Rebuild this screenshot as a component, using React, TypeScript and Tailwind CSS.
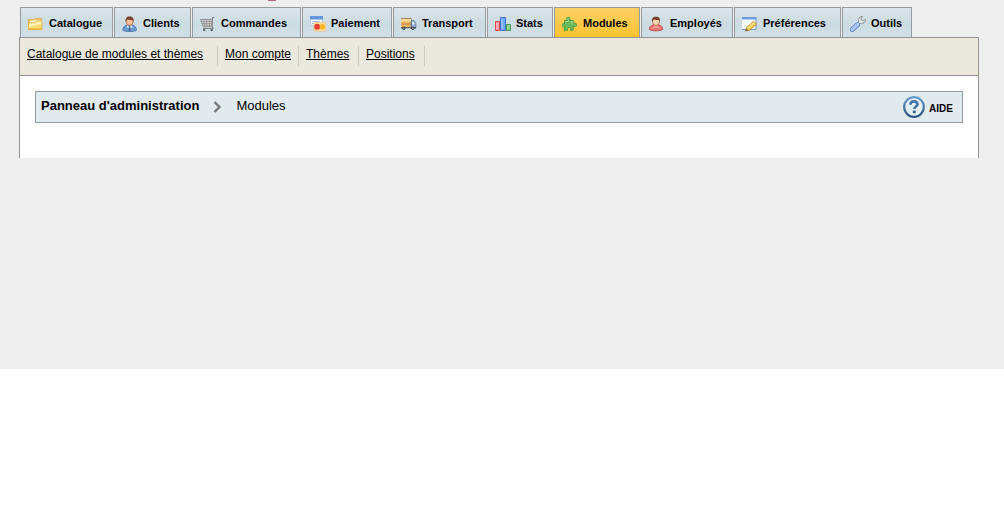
import type { ReactNode } from 'react';

type Tab = {
  label: string;
  width: string;
  icon: ReactNode;
  active?: boolean;
};

function Icon({ children }: { children: ReactNode }) {
  return (
    <svg viewBox="0 0 16 16" className="size-4 shrink-0" aria-hidden="true">
      {children}
    </svg>
  );
}

const tabs: Tab[] = [
  {
    label: 'Catalogue',
    width: 'w-[93px]',
    icon: (
      <Icon>
        <path d="M.5 13V3.5h5l1.5-1h6.5V13z" fill="#e9c468" stroke="#dfb45b" />
        <path d="M2 4.5h10.5v4H2z" fill="#fffdf0" />
        <path d="M.5 13.5V6.8h6L8 5.2h6v8.3z" fill="#fbdc72" stroke="#e6b33c" strokeWidth=".8" />
        <path d="M1 7.4h6l1.5-1.6h5v2L1 11z" fill="#fff3b4" />
        <path d="M1 13h13" stroke="#eda92d" />
      </Icon>
    ),
  },
  {
    label: 'Clients',
    width: 'w-[77px]',
    icon: (
      <Icon>
        <path d="M.8 14.3c0-3.5 1.8-5 4.8-5.4h4c3 .4 4.8 1.9 4.8 5.4-2 1.6-11.6 1.6-13.6 0z" fill="#6c9dd0" stroke="#3f6da5" strokeWidth=".8" />
        <path d="M5.3 9l2.3 2.5L9.9 9l.5 2-2.8 2.5L4.8 11z" fill="#e8f1fa" />
        <path d="M7 10.5h1.2l.7 3.5-1.3 1-1.3-1z" fill="#3b5f94" />
        <ellipse cx="7.6" cy="5.6" rx="3.5" ry="3.9" fill="#f4bd94" stroke="#a35a35" strokeWidth=".7" />
        <path d="M3.7 6C3 2.6 4.4.6 7.6.6s4.7 2 3.9 5.4l-1-2C8.2 4.2 6.2 3.7 5 3.6z" fill="#7c4030" />
      </Icon>
    ),
  },
  {
    label: 'Commandes',
    width: 'w-[109px]',
    icon: (
      <Icon>
        <path d="M14.5 1.5h-2L12 10.5l1 2H3" fill="none" stroke="#84878a" strokeWidth="1.2" />
        <path d="M.5 3.5h11.7l-.8 7-7.9.5z" fill="#dadcdd" stroke="#85888a" strokeWidth=".9" />
        <path d="M1 5.5h11M1.9 7.4h10M2.7 9.2h9M3.7 3.5l1 7M6.7 3.5l.4 7M9.5 3.5l-.2 7" stroke="#85888a" strokeWidth=".7" />
        <circle cx="4.2" cy="14" r="1.3" fill="#6d7073" />
        <circle cx="11.7" cy="14" r="1.3" fill="#6d7073" />
      </Icon>
    ),
  },
  {
    label: 'Paiement',
    width: 'w-[90px]',
    icon: (
      <Icon>
        <path d="M.5.5h12v9H.5z" fill="#eef4fb" stroke="#bccde5" />
        <path d="M0 0h13v3.5H0z" fill="#6595d9" />
        <path d="M2 5.5h8M2 7.5h3" stroke="#a8bfdf" />
        <rect x="4" y="6.5" width="11.5" height="8.5" rx="1" fill="#ffdf9a" stroke="#f4c783" strokeWidth=".8" />
        <circle cx="7.2" cy="10.7" r="2.9" fill="#e63b32" />
        <circle cx="12.3" cy="10.7" r="2.7" fill="#f7b52b" />
      </Icon>
    ),
  },
  {
    label: 'Transport',
    width: 'w-[93px]',
    icon: (
      <Icon>
        <path d="M-.5 2.5h10.7v9.3H-.5z" fill="#eeb763" stroke="#866e50" strokeWidth=".8" />
        <path d="M0 3h10v2.5H0z" fill="#f9dba1" />
        <path d="M0 8h10" stroke="#bd8549" />
        <path d="M10.3 4.5h2.5l2 3v4.7h-4.5z" fill="#93b7e8" stroke="#4e658f" strokeWidth=".8" />
        <path d="M11.3 5.8h1.2l1.3 2.4h-2.5z" fill="#eef7ff" />
        <path d="M0 11.6h15" stroke="#59616d" />
        <circle cx="2.8" cy="12.3" r="1.7" fill="#3f444b" />
        <circle cx="11.8" cy="12.3" r="1.7" fill="#3f444b" />
        <circle cx="2.8" cy="12.3" r=".6" fill="#c8cbd0" />
        <circle cx="11.8" cy="12.3" r=".6" fill="#c8cbd0" />
      </Icon>
    ),
  },
  {
    label: 'Stats',
    width: 'w-[66px]',
    icon: (
      <Icon>
        <path d="M.5 5.5h4v9h-4z" fill="#ff9a9a" stroke="#db4653" />
        <path d="M5.5 1.5h5v13h-5z" fill="#70a8f4" stroke="#3e6fce" />
        <path d="M11.5 8.5h4v6h-4z" fill="#84cf85" stroke="#439d4c" />
        <path d="M2 7v6M7 3v10M13 10v3" stroke="#fff" strokeOpacity=".5" />
      </Icon>
    ),
  },
  {
    label: 'Modules',
    width: 'w-[86px]',
    active: true,
    icon: (
      <Icon>
        <path
          d="M2.5 4.5H5C4 2.5 4.7 1.3 6.3 1.3S8.6 2.5 7.7 4.5h3.5v3.2c2-1 3.5-.5 3.5 1.2s-1.5 2.2-3.5 1.2v4.2H8.4c.8-2 .1-3-1.3-3s-2.1 1-1.3 3H2.5v-3.6c-1.4.9-2.4.3-2.4-1.3S1.100 7.100 2.500 8z"
          fill="#67bd5b"
          stroke="#479b42"
          strokeWidth=".9"
        />
        <path d="M3.500 5.500h3l-.5-3M8.500 5.500h1.700v3" fill="none" stroke="#a9dd98" strokeWidth=".9" />
      </Icon>
    ),
  },
  {
    label: 'Employés',
    width: 'w-[92px]',
    icon: (
      <Icon>
        <path d="M.3 13.500c0-3.200 1.800-4.300 4.500-4.500h4.400c2.700.2 4.500 1.300 4.500 4.500-2 1.800-11.400 1.800-13.400 0z" fill="#ee7770" stroke="#c84645" strokeWidth=".8" />
        <path d="M2.500 12.300c2-1.200 7-1.200 9 0" fill="none" stroke="#ffaca2" />
        <path d="M4.800 8.800h4.400L7 11z" fill="#f7cbab" />
        <ellipse cx="7" cy="5.600" rx="3.500" ry="3.800" fill="#fbd3b2" stroke="#a35a35" strokeWidth=".7" />
        <path d="M3.200 6C2.400 2.600 3.900.8 7 .8s4.600 1.800 3.800 5.200L9.900 4C7.600 4.200 5.600 3.700 4.400 3.600z" fill="#793a2b" />
      </Icon>
    ),
  },
  {
    label: 'Préférences',
    width: 'w-[107px]',
    icon: (
      <Icon>
        <path d="M-.5 1.500h14.500v12H-.5z" fill="#f7fbff" stroke="#7595c6" />
        <path d="M-1 1h15.500v2.500H-1z" fill="#6e9ce0" />
        <path d="M3.500 15l1-3.600 7-6 3.300 2.600-7.300 6.300z" fill="#f4cc56" stroke="#b98534" strokeWidth=".8" />
        <path d="M5.500 12.200l7-5.500" stroke="#fff0a3" />
        <path d="M3.200 15.300l1-3 2.200 2.200z" fill="#8b6345" />
      </Icon>
    ),
  },
  {
    label: 'Outils',
    width: 'w-[70px]',
    icon: (
      <Icon>
        <path d="M7.300 7.300L8.500 5.500C7.900 2.600 9.600.3 12.400.4L10.900 3l1.800 1.700 2.600-1.300c.3 3-2.200 4.700-4.700 4L9 9z" fill="#dedfe1" stroke="#86898e" strokeWidth=".9" />
        <path d="M2.200 13.600l5.400-5" stroke="#6689cb" strokeWidth="5" strokeLinecap="round" />
        <path d="M2.300 13.400l5.200-4.900" stroke="#a9c4f5" strokeWidth="3.400" strokeLinecap="round" />
      </Icon>
    ),
  },
];

const subTabs = [
  { label: 'Catalogue de modules et thèmes', width: 'w-[191px]' },
  { label: 'Mon compte', width: 'w-[74px]' },
  { label: 'Thèmes', width: 'w-[53px]' },
  { label: 'Positions', width: 'w-[59px]' },
];

export default function App() {
  return (
    <div className="min-h-screen bg-white font-['Liberation_Sans',Arial,sans-serif] text-xs text-black">
      <div className="bg-[#eeeeee] pr-[25px] pb-[211px] pl-[19px]">
        <div className="h-[7px]">
          <div className="ml-[249px] h-px w-2 bg-[#b5657f]" />
        </div>

        <nav aria-label="Menu principal">
          <ul className="flex gap-px pl-px">
            {tabs.map((tab) => (
              <li key={tab.label} className={`${tab.width} shrink-0`}>
                <a
                  href="#"
                  aria-current={tab.active ? 'page' : undefined}
                  className={`flex h-[30px] items-center gap-[5px] border border-b-0 border-[#949a9e] pt-[2px] pl-[7px] text-[11px] font-bold whitespace-nowrap ${
                    tab.active
                      ? 'bg-linear-to-b from-[#fbd063] to-[#ffc32a]'
                      : 'bg-linear-to-b from-[#dbe5e9] via-[#ccdce3] to-[#d0dfe5]'
                  }`}
                >
                  {tab.icon}
                  <span>{tab.label}</span>
                </a>
              </li>
            ))}
          </ul>
        </nav>

        <main className="border-x border-t border-[#949494] bg-white">
          <ul className="flex h-[38px] border-b border-[#949494] bg-[#ebe9dd] pt-2 pl-[7px]">
            {subTabs.map((item) => (
              <li key={item.label} className={`${item.width} mr-[7px] h-5 border-r border-[#cfcdbf] leading-4`}>
                <a href="#" className="underline">
                  {item.label}
                </a>
              </li>
            ))}
          </ul>

          <div className="px-[15px] pt-[15px] pb-[35px]">
            <div className="flex h-8 items-center justify-between border border-[#949a9e] bg-[#e1eaed] pr-[9px] pl-[5px]">
              <div className="flex items-center pb-[2px] text-[13px]">
                <a href="#" className="font-bold">
                  Panneau d'administration
                </a>
                <svg viewBox="0 0 9 12" className="mt-[2px] ml-[14px] h-3 w-[9px]" aria-hidden="true">
                  <path d="M1.500 1l5 5-5 5" fill="none" stroke="#75797b" strokeWidth="2.400" />
                </svg>
                <span className="ml-[14px]">Modules</span>
              </div>
              <a href="#" className="flex items-center gap-1 text-[10px] font-bold">
                <svg viewBox="0 0 22 22" className="size-[22px]" aria-hidden="true">
                  <defs>
                    <linearGradient id="help" x1="0" y1="0" x2="0" y2="1">
                      <stop offset="0" stopColor="#6d9dcc" />
                      <stop offset="1" stopColor="#2c5383" />
                    </linearGradient>
                  </defs>
                  <circle cx="11" cy="11" r="9.800" fill="#e4eef5" stroke="url(#help)" strokeWidth="2.200" />
                  <path d="M7.400 8.800C7.500 6.200 9 5.400 11 5.400c2.200 0 3.500 1.100 3.500 2.900 0 2.200-3.200 2.300-3.200 4.700" fill="none" stroke="#4471a5" strokeWidth="2.600" />
                  <path d="M9.900 14.600h2.800v2.600H9.900z" fill="#38618f" />
                </svg>
                <span className="pt-1">AIDE</span>
              </a>
            </div>
          </div>
        </main>
      </div>
    </div>
  );
}
